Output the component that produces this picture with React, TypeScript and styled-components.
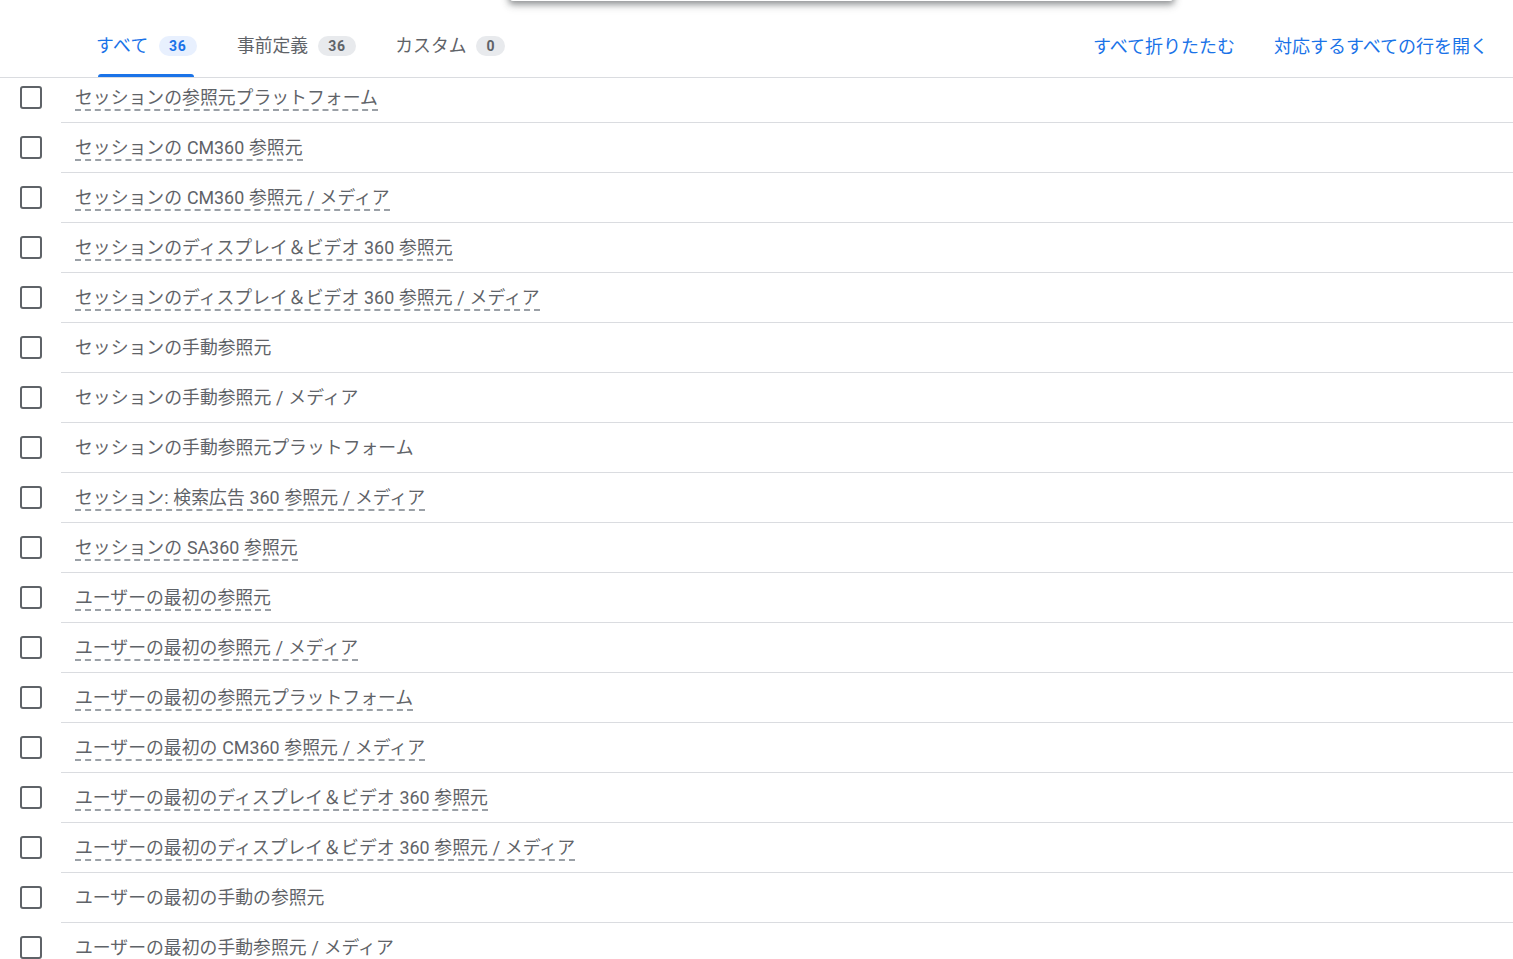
import React from 'react';
import styled, { createGlobalStyle } from 'styled-components';

const GlobalStyle = createGlobalStyle`
  * {
    box-sizing: border-box;
  }
  html, body {
    margin: 0;
    padding: 0;
    height: 959px;
    overflow: hidden;
    background: #fff;
  }
  body {
    font-family: Roboto, "Noto Sans CJK JP", sans-serif;
    font-size: 18px;
    color: #5f6368;
  }
`;

const Page = styled.div`
  position: relative;
  height: 959px;
  overflow: hidden;
`;

const TopSheet = styled.div`
  position: absolute;
  top: -40px;
  left: 510px;
  width: 663px;
  height: 41px;
  background: #fff;
  border-radius: 3px;
  box-shadow: 0 2px 6px 1px rgba(60, 64, 67, 0.5), 0 3px 10px 2px rgba(60, 64, 67, 0.15);
`;

const Header = styled.div`
  display: flex;
  justify-content: space-between;
  align-items: stretch;
  height: 78px;
  padding: 14px 25px 0 96px;
  border-bottom: 1px solid #dadce0;
`;

const Tabs = styled.div`
  display: flex;
  gap: 39.5px;
`;

const Tab = styled.div<{ $active?: boolean }>`
  position: relative;
  display: flex;
  align-items: center;
  gap: 10px;
  height: 63px;
  color: ${p => (p.$active ? '#1a73e8' : '#5f6368')};
  font-size: 17.8px;
  line-height: 24px;
  ${p => p.$active && `
    width: 101.5px;
    letter-spacing: 0.5px;
    &::after {
      content: '';
      position: absolute;
      left: 2px;
      bottom: 0;
      width: 96px;
      height: 3px;
      background: #1a73e8;
      border-radius: 3px 3px 0 0;
    }
  `}
`;

const Badge = styled.span<{ $active?: boolean }>`
  display: inline-flex;
  align-items: center;
  justify-content: center;
  flex: none;
  min-width: 29px;
  height: 20px;
  padding: 0 10px;
  border-radius: 10px;
  font-size: 14px;
  font-weight: 700;
  letter-spacing: 0.8px;
  background: ${p => (p.$active ? '#e8f0fe' : '#e8eaed')};
  color: ${p => (p.$active ? '#1a73e8' : '#5f6368')};
`;

const Actions = styled.div`
  display: flex;
  gap: 39px;
  height: 63px;
  align-items: center;
  padding-top: 2px;
`;

const ActionLink = styled.a`
  color: #1a73e8;
  font-size: 18px;
  line-height: 24px;
  text-decoration: none;
`;

const Row = styled.div<{ $first?: boolean }>`
  display: flex;
  align-items: stretch;
  height: ${p => (p.$first ? '45px' : '50px')};
`;

const CheckCell = styled.div<{ $first?: boolean }>`
  flex: none;
  width: 61px;
  padding: ${p => (p.$first ? '8px' : '13px')} 0 0 20px;
`;

const Checkbox = styled.span`
  display: block;
  width: 22px;
  height: 23px;
  border: 2px solid #5f6368;
  border-radius: 3px;
  background: #fff;
`;

const LabelCell = styled.div<{ $first?: boolean }>`
  flex: 1;
  display: flex;
  align-items: center;
  padding-left: 14px;
  padding-bottom: ${p => (p.$first ? '5px' : '0')};
  border-bottom: 1px solid #dadce0;
`;

const Label = styled.span<{ $dashed?: boolean }>`
  display: inline-block;
  height: 26px;
  line-height: 24px;
  padding-top: 1px;
  color: #5f6368;
  font-size: 17.85px;
  word-spacing: 0.4px;
  border-bottom: 2px ${p => (p.$dashed ? 'dashed #9aa0a6' : 'solid transparent')};
`;

const rows: { text: string; dashed: boolean }[] = [
  { text: 'セッションの参照元プラットフォーム', dashed: true },
  { text: 'セッションの CM360 参照元', dashed: true },
  { text: 'セッションの CM360 参照元 / メディア', dashed: true },
  { text: 'セッションのディスプレイ＆ビデオ 360 参照元', dashed: true },
  { text: 'セッションのディスプレイ＆ビデオ 360 参照元 / メディア', dashed: true },
  { text: 'セッションの手動参照元', dashed: false },
  { text: 'セッションの手動参照元 / メディア', dashed: false },
  { text: 'セッションの手動参照元プラットフォーム', dashed: false },
  { text: 'セッション: 検索広告 360 参照元 / メディア', dashed: true },
  { text: 'セッションの SA360 参照元', dashed: true },
  { text: 'ユーザーの最初の参照元', dashed: true },
  { text: 'ユーザーの最初の参照元 / メディア', dashed: true },
  { text: 'ユーザーの最初の参照元プラットフォーム', dashed: true },
  { text: 'ユーザーの最初の CM360 参照元 / メディア', dashed: true },
  { text: 'ユーザーの最初のディスプレイ＆ビデオ 360 参照元', dashed: true },
  { text: 'ユーザーの最初のディスプレイ＆ビデオ 360 参照元 / メディア', dashed: true },
  { text: 'ユーザーの最初の手動の参照元', dashed: false },
  { text: 'ユーザーの最初の手動参照元 / メディア', dashed: false },
];

const tabs = [
  { name: 'すべて', count: 36, active: true },
  { name: '事前定義', count: 36, active: false },
  { name: 'カスタム', count: 0, active: false },
];

function App() {
  return (
    <Page>
      <GlobalStyle />
      <TopSheet />
      <Header>
        <Tabs>
          {tabs.map(t => (
            <Tab key={t.name} $active={t.active}>
              {t.name}
              <Badge $active={t.active}>{t.count}</Badge>
            </Tab>
          ))}
        </Tabs>
        <Actions>
          <ActionLink href="#">すべて折りたたむ</ActionLink>
          <ActionLink href="#">対応するすべての行を開く</ActionLink>
        </Actions>
      </Header>
      {rows.map((r, i) => (
        <Row key={r.text} $first={i === 0}>
          <CheckCell $first={i === 0}>
            <Checkbox />
          </CheckCell>
          <LabelCell $first={i === 0}>
            <Label $dashed={r.dashed}>{r.text}</Label>
          </LabelCell>
        </Row>
      ))}
    </Page>
  );
}

export default App;
